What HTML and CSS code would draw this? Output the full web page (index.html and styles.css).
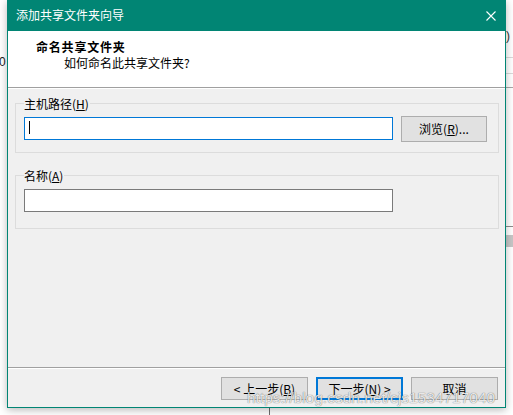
FILE: index.html
```html
<!DOCTYPE html>
<html lang="zh-CN">
<head>
<meta charset="utf-8">
<title>添加共享文件夹向导</title>
<link rel="stylesheet" href="styles.css">
</head>
<body>
<div class="desk">
  <div class="bg-left-zero">0</div>
  <div class="bg-right">
    <span class="bg-paren">)</span>
    <span class="bg-line l1"></span>
    <span class="bg-line l2"></span>
    <span class="bg-line l3"></span>
    <span class="bg-line l4"></span>
    <span class="bg-block"></span>
  </div>
  <div class="bg-vline"></div>

  <div class="dialog">
    <div class="titlebar">
      <span class="title">添加共享文件夹向导</span>
      <svg class="close" width="10" height="10" viewBox="0 0 10 10"><path d="M0.5 0.5L9.5 9.5M9.5 0.5L0.5 9.5" stroke="#fff" stroke-width="1.1" fill="none"/></svg>
    </div>
    <div class="header">
      <div class="h-title">命名共享文件夹</div>
      <div class="h-sub">如何命名此共享文件夹?</div>
    </div>
    <div class="content">
      <div class="group g1">
        <span class="legend">主机路径(<u>H</u>)</span>
        <div class="row">
          <div class="field focused"><span class="caret"></span></div>
          <div class="btn">浏览(<u>R</u>)...</div>
        </div>
      </div>
      <div class="group g2">
        <span class="legend">名称(<u>A</u>)</span>
        <div class="row">
          <div class="field"></div>
        </div>
      </div>
    </div>
    <div class="footer">
      <div class="btn">&lt; 上一步(<u>B</u>)</div>
      <div class="btn default">下一步(<u>N</u>) &gt;</div>
      <div class="btn">取消</div>
    </div>
  </div>

  <div class="watermark">https://blog.csdn.net/cjs1534717040</div>
</div>
</body>
</html>
```

FILE: styles.css
```css
html, body {
  margin: 0;
  padding: 0;
  background: #ffffff;
}

.desk {
  position: relative;
  width: 513px;
  height: 415px;
  overflow: hidden;
  background: #ffffff;
  font-family: "Noto Sans CJK SC", "Noto Sans", sans-serif;
  font-size: 12px;
  color: #000;
}

/* background application fragments */
.bg-left-zero {
  position: absolute;
  left: -1px;
  top: 54px;
  font-family: "Liberation Sans", sans-serif;
  font-size: 12px;
  line-height: 16px;
  color: #222;
}

.bg-right {
  position: absolute;
  left: 506px;
  top: 0;
  width: 7px;
  height: 415px;
}

.bg-paren {
  position: absolute;
  left: 0;
  top: 29px;
  font-family: "Liberation Sans", sans-serif;
  font-size: 12px;
  line-height: 14px;
  color: #333;
}

.bg-line {
  position: absolute;
  left: 0;
  width: 7px;
  height: 1px;
  background: #dadada;
}
.bg-line.l1 { top: 57px; }
.bg-line.l2 { top: 73px; }
.bg-line.l3 { top: 87px; background: #a8a8a8; }
.bg-line.l4 { top: 226px; background: #8c8c8c; }

.bg-block {
  position: absolute;
  left: 0;
  top: 235px;
  width: 7px;
  height: 12px;
  background: #c6c6c6;
}

.bg-vline {
  position: absolute;
  left: 269px;
  top: 408px;
  width: 1px;
  height: 7px;
  background: #6e6e6e;
}

/* dialog window */
.dialog {
  position: absolute;
  left: 7px;
  top: 0;
  width: 497px;
  height: 406px;
  border: 1px solid #018574;
  background: #f0f0f0;
  display: flex;
  flex-direction: column;
  box-shadow: 0 2px 8px rgba(0, 0, 0, 0.28);
}

.titlebar {
  height: 30px;
  margin-top: -1px;
  padding-top: 1px;
  background: #018574;
  display: flex;
  align-items: center;
  justify-content: space-between;
  color: #ffffff;
}

.title {
  padding-left: 8px;
  line-height: 16px;
  margin-top: -2px;
}

.close {
  margin-right: 9px;
  margin-top: -1px;
  display: block;
}

.header {
  height: 48px;
  padding-top: 8px;
  background: #ffffff;
  border-bottom: 1px solid #a0a0a0;
}

.h-title {
  padding-left: 28px;
  font-weight: bold;
  line-height: 16px;
  letter-spacing: 0.8px;
}

.h-sub {
  padding-left: 56px;
  line-height: 16px;
}

.content {
  flex: 1;
  border-top: 1px solid #ffffff;
  padding: 14px 6px 0 7px;
}

.group {
  position: relative;
  border: 1px solid #dcdcdc;
  padding: 12px 8px 10px 8px;
}

.group.g2 {
  margin-top: 22px;
  padding-top: 13px;
  padding-bottom: 16px;
}

.legend {
  position: absolute;
  left: 8px;
  top: -8px;
  padding: 0 1px 0 0;
  line-height: 16px;
  background: #f0f0f0;
}

u {
  text-decoration: underline;
  text-underline-offset: 1px;
}

.row {
  display: flex;
  align-items: flex-start;
  gap: 8px;
}

.field {
  box-sizing: border-box;
  width: 369px;
  height: 23px;
  background: #ffffff;
  border: 1px solid #7a7a7a;
  position: relative;
}

.g1 .field {
  margin-top: 1px;
}

.field.focused {
  border-color: #0078d7;
}

.caret {
  position: absolute;
  left: 4px;
  top: 3px;
  width: 1px;
  height: 13px;
  background: #000;
}

.btn {
  box-sizing: border-box;
  width: 86px;
  height: 26px;
  background: #e1e1e1;
  border: 1px solid #adadad;
  display: flex;
  align-items: center;
  justify-content: center;
  line-height: 16px;
}

.footer {
  height: 23px;
  border-top: 1px solid #a0a0a0;
  box-shadow: inset 0 1px 0 #ffffff;
  padding: 9px 7px 7px 0;
  display: flex;
  justify-content: flex-end;
  gap: 8px;
}

.footer .btn {
  width: 87px;
  height: 23px;
}

.btn.default {
  border: 2px solid #0078d7;
}

.watermark {
  position: absolute;
  left: 247px;
  top: 389px;
  font-family: "Liberation Sans", sans-serif;
  font-size: 15.5px;
  line-height: 18px;
  color: rgba(255, 255, 255, 0.85);
  text-shadow: 0 0 1px rgba(0, 0, 0, 0.45), 0 0 1px rgba(0, 0, 0, 0.3);
  white-space: nowrap;
}
```
